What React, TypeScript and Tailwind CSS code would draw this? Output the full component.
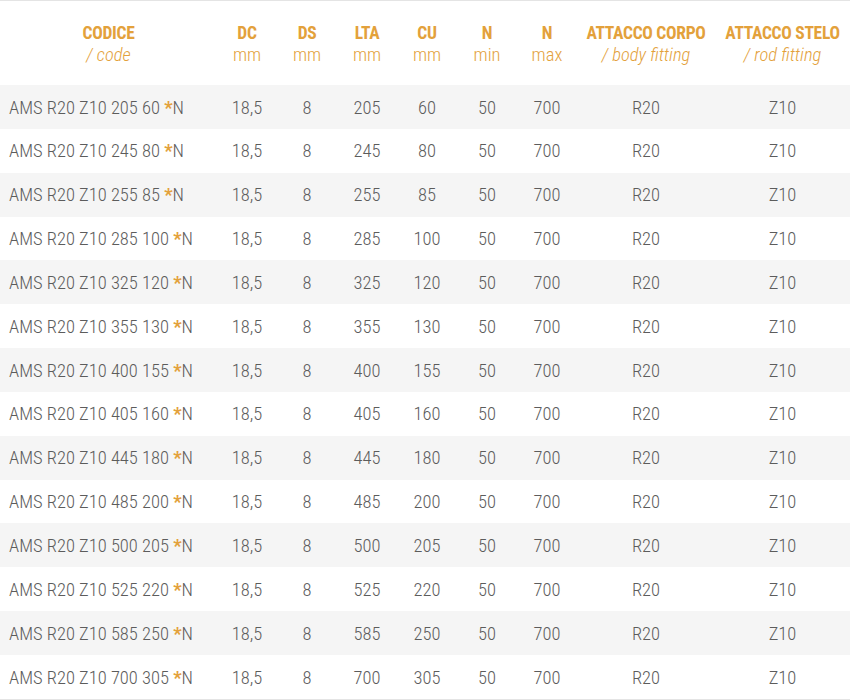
const rows: [string, string, string][] = [
  ['205 60', '205', '60'],
  ['245 80', '245', '80'],
  ['255 85', '255', '85'],
  ['285 100', '285', '100'],
  ['325 120', '325', '120'],
  ['355 130', '355', '130'],
  ['400 155', '400', '155'],
  ['405 160', '405', '160'],
  ['445 180', '445', '180'],
  ['485 200', '485', '200'],
  ['500 205', '500', '205'],
  ['525 220', '525', '220'],
  ['585 250', '585', '250'],
  ['700 305', '700', '305'],
];

const cols = 'grid grid-cols-[217px_60px_60px_60px_60px_60px_60px_138px_135px]';

const headers: [string, string, boolean][] = [
  ['CODICE', '/ code', true],
  ['DC', 'mm', false],
  ['DS', 'mm', false],
  ['LTA', 'mm', false],
  ['CU', 'mm', false],
  ['N', 'min', false],
  ['N', 'max', false],
  ['ATTACCO CORPO', '/ body fitting', true],
  ['ATTACCO STELO', '/ rod fitting', true],
];

export default function App() {
  return (
    <div
      className="w-[850px] h-[700px] bg-white overflow-hidden text-[18.5px] font-light"
      style={{ fontFamily: '"Roboto Condensed", Roboto, sans-serif' }}
    >
      <div className="border-t border-[#e4e4e4]">
        {/* header */}
        <div className={`${cols} h-[84px] items-center text-[#e3a13b]`}>
          {headers.map(([top, sub, italic], i) => (
            <div key={i} className="flex flex-col items-center leading-[22px] mt-[1px]">
              <span className="font-bold text-[17.5px] tracking-[-0.3px]">{top}</span>
              <span className={italic ? 'italic' : ''}>{sub}</span>
            </div>
          ))}
        </div>

        {/* body */}
        <div className="border-b border-[#e4e4e4] text-[#5c5c5c]">
          {rows.map(([code, lta, cu], i) => (
            <div
              key={code}
              className={`${cols} h-[43.85px] items-center text-center pt-[3px] ${i % 2 === 0 ? 'bg-[#f5f5f5]' : 'bg-white'}`}
            >
              <div className="text-left pl-[9px]">
                AMS R20 Z10 {code} <span className="text-[#e3a13b] font-bold">*</span>N
              </div>
              <div>18,5</div>
              <div>8</div>
              <div>{lta}</div>
              <div>{cu}</div>
              <div>50</div>
              <div>700</div>
              <div>R20</div>
              <div>Z10</div>
            </div>
          ))}
        </div>
      </div>
    </div>
  );
}
